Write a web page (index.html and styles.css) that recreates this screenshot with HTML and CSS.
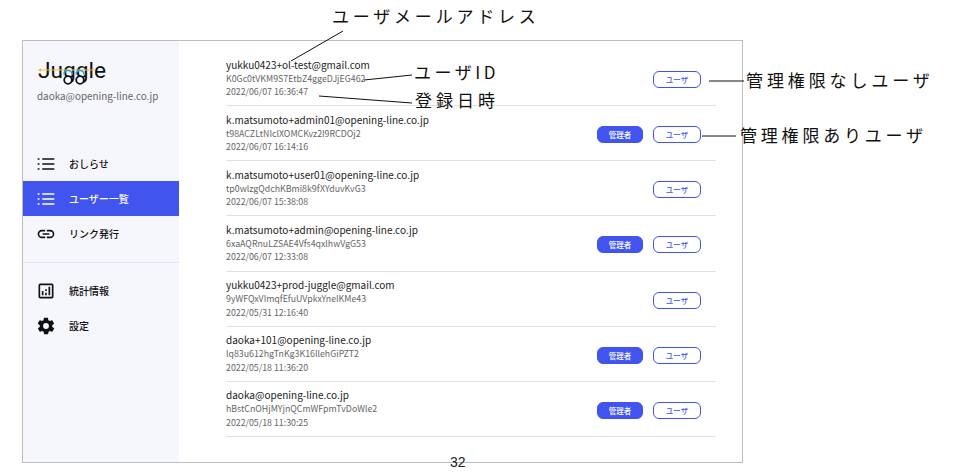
FILE: index.html
```
<!DOCTYPE html>
<html lang="ja">
<head>
<meta charset="utf-8">
<title>ユーザー一覧</title>
<link rel="stylesheet" href="styles.css">
</head>
<body>
<div class="frame">
  <aside class="side">
    <div class="brand">
      <div class="logo">Juggle
        <svg class="logo-mark" width="72" height="28" viewBox="0 0 72 28"><circle cx="31" cy="21" r="3.800" fill="#fff" stroke="#111" stroke-width="1.800"/><circle cx="43" cy="21" r="3.800" fill="#fff" stroke="#111" stroke-width="1.800"/><path d="M4 11H58" stroke="#f2c230" stroke-width="1.200"/><path d="M1 11l3-2v4z" fill="#f2c230"/><path d="M27 15.500a4 4 0 0 1 8 0M39 15.500a4 4 0 0 1 8 0" fill="none" stroke="#2aa3e0" stroke-width="1.600"/></svg>
      </div>
      <div class="account">daoka@opening-line.co.jp</div>
    </div>
    <nav class="nav">
      <a class="item"><svg class="ico" viewBox="0 0 24 24"><path d="M7.500 6H22M7.500 12H22M7.500 18H22" stroke="currentColor" stroke-width="2"/><path d="M2 5h2.200v2H2zM2 11h2.200v2H2zM2 17h2.200v2H2z" fill="currentColor"/></svg>おしらせ</a>
      <a class="item active"><svg class="ico" viewBox="0 0 24 24"><path d="M7.500 6H22M7.500 12H22M7.500 18H22" stroke="currentColor" stroke-width="2"/><path d="M2 5h2.200v2H2zM2 11h2.200v2H2zM2 17h2.200v2H2z" fill="currentColor"/></svg>ユーザー一覧</a>
      <a class="item"><svg class="ico" viewBox="0 0 24 24"><path d="M3.900 12A3.100 3.100 0 0 1 7 8.900h4V7H7a5 5 0 0 0 0 10h4v-1.900H7A3.100 3.100 0 0 1 3.900 12zM8 13h8v-2H8zm9-6h-4v1.900h4a3.100 3.100 0 0 1 0 6.200h-4V17h4a5 5 0 0 0 0-10z" fill="currentColor"/></svg>リンク発行</a>
    </nav>
    <hr class="rule">
    <nav class="nav">
      <a class="item"><svg class="ico" viewBox="0 0 24 24"><path d="M19 3H5a2 2 0 0 0-2 2v14a2 2 0 0 0 2 2h14a2 2 0 0 0 2-2V5a2 2 0 0 0-2-2zm0 16H5V5h14zM7 12h2v5H7zm8-5h2v10h-2zm-4 7h2v3h-2zm0-4h2v2h-2z" fill="currentColor"/></svg>統計情報</a>
      <a class="item"><svg class="ico" viewBox="0 0 24 24"><path d="M19.400 13a7.600 7.600 0 0 0 0-2l2.100-1.600a.5.5 0 0 0 .1-.6l-2-3.500a.5.5 0 0 0-.6-.2l-2.500 1a7.300 7.300 0 0 0-1.700-1l-.4-2.700a.5.5 0 0 0-.5-.4h-4a.5.5 0 0 0-.5.400l-.4 2.700a7.300 7.300 0 0 0-1.700 1l-2.500-1a.5.5 0 0 0-.6.200l-2 3.500a.5.5 0 0 0 .1.600L4.600 11a7.600 7.600 0 0 0 0 2l-2.100 1.600a.5.5 0 0 0-.1.600l2 3.500a.5.5 0 0 0 .6.200l2.500-1a7.300 7.300 0 0 0 1.700 1l.4 2.700a.5.5 0 0 0 .5.400h4a.5.5 0 0 0 .5-.400l.4-2.700a7.300 7.300 0 0 0 1.700-1l2.500 1a.5.5 0 0 0 .6-.200l2-3.500a.5.5 0 0 0-.1-.600zM12 15.500a3.500 3.500 0 1 1 0-7 3.500 3.500 0 0 1 0 7z" fill="currentColor"/></svg>設定</a>
    </nav>
  </aside>
  <main class="list">
    <div class="row"><div class="info"><div class="mail">yukku0423+ol-test@gmail.com</div><div class="meta">K0Gc0tVKM9S7EtbZ4ggeDJjEG462</div><div class="meta">2022/06/07 16:36:47</div></div><span class="tag">ユーザ</span></div>
    <div class="row"><div class="info"><div class="mail">k.matsumoto+admin01@opening-line.co.jp</div><div class="meta">t98ACZLtNIclXOMCKvz2I9RCDOj2</div><div class="meta">2022/06/07 16:14:16</div></div><span class="tag admin">管理者</span><span class="tag">ユーザ</span></div>
    <div class="row"><div class="info"><div class="mail">k.matsumoto+user01@opening-line.co.jp</div><div class="meta">tp0wlzgQdchKBmi8k9fXYduvKvG3</div><div class="meta">2022/06/07 15:38:08</div></div><span class="tag">ユーザ</span></div>
    <div class="row"><div class="info"><div class="mail">k.matsumoto+admin@opening-line.co.jp</div><div class="meta">6xaAQRnuLZSAE4Vfs4qxlhwVgG53</div><div class="meta">2022/06/07 12:33:08</div></div><span class="tag admin">管理者</span><span class="tag">ユーザ</span></div>
    <div class="row"><div class="info"><div class="mail">yukku0423+prod-juggle@gmail.com</div><div class="meta">9yWFQxVImqfEfuUVpkxYneIKMe43</div><div class="meta">2022/05/31 12:16:40</div></div><span class="tag">ユーザ</span></div>
    <div class="row"><div class="info"><div class="mail">daoka+101@opening-line.co.jp</div><div class="meta">lq83u612hgTnKg3K16IlehGiPZT2</div><div class="meta">2022/05/18 11:36:20</div></div><span class="tag admin">管理者</span><span class="tag">ユーザ</span></div>
    <div class="row"><div class="info"><div class="mail">daoka@opening-line.co.jp</div><div class="meta">hBstCnOHjMYjnQCmWFpmTvDoWle2</div><div class="meta">2022/05/18 11:30:25</div></div><span class="tag admin">管理者</span><span class="tag">ユーザ</span></div>
  </main>
</div>
<div class="pageno">32</div>
<svg class="leaders" width="961" height="474" viewBox="0 0 961 474"><path d="M343 31 291 61M364 80 412 75M319 96 412 103M709 81H744M702 136H736" fill="none" stroke="#111" stroke-width="1"/></svg>
<div class="note n1">ユーザメールアドレス</div>
<div class="note n2">ユーザID</div>
<div class="note n3">登録日時</div>
<div class="note n4">管理権限なしユーザ</div>
<div class="note n5">管理権限ありユーザ</div>
</body>
</html>
```
FILE: styles.css
```
* { box-sizing: border-box; }
html, body { margin: 0; height: 100%; overflow: hidden; }
body { position: relative; background: #fff; color: #222; font-family: "Noto Sans CJK JP", "Noto Sans", sans-serif; padding: 40px 0 0 22px; }
.frame { display: flex; width: 721px; height: 423px; border: 1.500px solid #bdbdbd; }
.side { width: 156px; flex: none; background: #f6f7fc; }
.brand { padding: 15px 0 0 14px; height: 105px; }
.logo { position: relative; font-family: Roboto, sans-serif; font-size: 22.700px; line-height: 30px; color: #111; padding-left: 1px; }
.logo-mark { position: absolute; left: 0; top: 3px; }
.account { font-size: 9.900px; line-height: 14px; color: #666; margin-top: 3px; }
.nav { display: flex; flex-direction: column; }
.item { display: flex; align-items: center; height: 35px; padding-left: 13px; gap: 13px; font-size: 10px; font-weight: 500; color: #111; }
.item.active { background: #4155ee; color: #fff; }
.ico { width: 20px; height: 20px; flex: none; }
.rule { border: 0; border-top: 1px solid #e3e5f0; margin: 11px 0 10px; }
.list { margin: 10px 0 0 47px; width: 490px; }
.row { display: flex; align-items: center; gap: 10px; height: 55.150px; border-bottom: 1px solid #e2e2e2; padding-right: 15px; }
.info { margin-right: auto; padding-bottom: 1px; }
.mail { font-size: 10px; line-height: 15px; color: #222; }
.meta { font-size: 8.800px; line-height: 13.500px; color: #666; }
.tag { width: 48px; height: 17px; margin-top: 3px; border: 1.500px solid #4155ee; border-radius: 6px; background: #fff; color: #4155ee; font-size: 7.500px; font-weight: 500; display: flex; align-items: center; justify-content: center; }
.tag.admin { width: 46px; background: #4155ee; color: #fff; }
.pageno { position: absolute; left: 450px; top: 454px; font: 14px/16px "Liberation Sans", sans-serif; color: #222; }
.leaders { position: absolute; left: 0; top: 0; pointer-events: none; }
.note { position: absolute; font-size: 17px; line-height: 22px; color: #111; white-space: nowrap; }
.n1 { left: 332px; top: 5px; letter-spacing: 3.800px; }
.n2 { left: 414px; top: 61px; letter-spacing: 3.500px; }
.n3 { left: 415px; top: 89px; letter-spacing: 4px; }
.n4 { left: 746px; top: 69px; letter-spacing: 3.900px; }
.n5 { left: 740px; top: 124px; letter-spacing: 3.800px; }
```
